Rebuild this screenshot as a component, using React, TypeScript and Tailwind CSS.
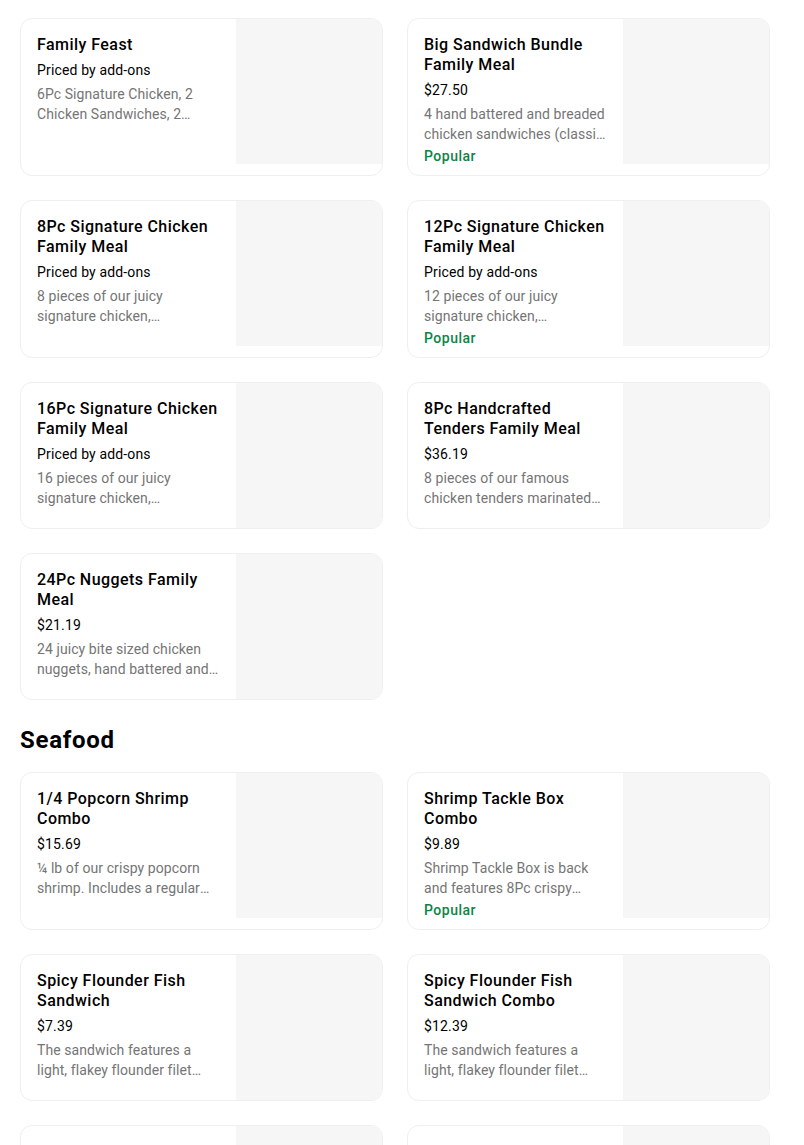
import React from 'react';

interface Item {
  name: string;
  price: string;
  desc: string;
  popular?: boolean;
}

const familyMeals: Item[] = [
  {
    name: 'Family Feast',
    price: 'Priced by add-ons',
    desc: '6Pc Signature Chicken, 2 Chicken Sandwiches, 2 Regular Sides, 4 Biscuits and a 2 Liter drink.',
  },
  {
    name: 'Big Sandwich Bundle Family Meal',
    price: '$27.50',
    desc: '4 hand battered and breaded chicken sandwiches (classic or spicy), 2 large sides and 4 biscuits.',
    popular: true,
  },
  {
    name: '8Pc Signature Chicken Family Meal',
    price: 'Priced by add-ons',
    desc: '8 pieces of our juicy signature chicken, handcrafted fresh daily, 2 large sides and 4 biscuits.',
  },
  {
    name: '12Pc Signature Chicken Family Meal',
    price: 'Priced by add-ons',
    desc: '12 pieces of our juicy signature chicken, handcrafted fresh daily, 3 large sides and 6 biscuits.',
    popular: true,
  },
  {
    name: '16Pc Signature Chicken Family Meal',
    price: 'Priced by add-ons',
    desc: '16 pieces of our juicy signature chicken, handcrafted fresh daily, 4 large sides and 8 biscuits.',
  },
  {
    name: '8Pc Handcrafted Tenders Family Meal',
    price: '$36.19',
    desc: '8 pieces of our famous chicken tenders marinated for 12 hours, 2 large sides and 4 biscuits.',
  },
  {
    name: '24Pc Nuggets Family Meal',
    price: '$21.19',
    desc: '24 juicy bite sized chicken nuggets, hand battered and breaded, 2 large sides and 4 biscuits.',
  },
];

const seafood: Item[] = [
  {
    name: '1/4 Popcorn Shrimp Combo',
    price: '$15.69',
    desc: '¼ lb of our crispy popcorn shrimp. Includes a regular side, a biscuit and a regular drink.',
  },
  {
    name: 'Shrimp Tackle Box Combo',
    price: '$9.89',
    desc: 'Shrimp Tackle Box is back and features 8Pc crispy butterfly shrimp, a regular side and a biscuit.',
    popular: true,
  },
  {
    name: 'Spicy Flounder Fish Sandwich',
    price: '$7.39',
    desc: 'The sandwich features a light, flakey flounder filet topped with spicy sauce and pickles.',
  },
  {
    name: 'Spicy Flounder Fish Sandwich Combo',
    price: '$12.39',
    desc: 'The sandwich features a light, flakey flounder filet topped with spicy sauce and pickles.',
  },
  {
    name: 'Flounder Fish Sandwich',
    price: '$6.99',
    desc: 'The sandwich features a light, flakey flounder filet with tartar sauce.',
  },
  {
    name: 'Flounder Fish Sandwich Combo',
    price: '$11.99',
    desc: 'The sandwich features a light, flakey flounder filet with tartar sauce.',
  },
];

const ItemCard: React.FC<{ item: Item }> = ({ item }) => (
  <div className="flex overflow-hidden rounded-xl border border-[#efefef] bg-white">
    <div className="min-w-0 flex-1 px-4 pt-4 pb-[9px]">
      <h3 className="text-base leading-5 font-medium tracking-[0.45px] text-black">{item.name}</h3>
      <p className="mt-[5px] text-sm leading-5 tracking-[0.15px] text-black">{item.price}</p>
      <p className="mt-1 line-clamp-2 text-sm leading-5 tracking-[0.08px] text-[#757575]">{item.desc}</p>
      {item.popular && (
        <p className="mt-[2px] text-sm leading-5 font-medium tracking-[0.5px] text-[#0e8345]">Popular</p>
      )}
    </div>
    <div className="h-[145px] w-[146px] shrink-0 self-start bg-[#f6f6f6]" />
  </div>
);

export default function App() {
  return (
    <div
      className="h-[1145px] overflow-hidden bg-white pt-[18px] pl-5"
      style={{ fontFamily: 'Roboto, "Noto Sans", sans-serif' }}
    >
      <div className="w-[750px]">
        <div className="grid grid-cols-2 gap-6">
          {familyMeals.map((item) => (
            <ItemCard key={item.name} item={item} />
          ))}
        </div>
        <h2 className="mt-6 mb-4 text-2xl leading-8 font-bold tracking-[0.7px] text-black">Seafood</h2>
        <div className="grid grid-cols-2 gap-6">
          {seafood.map((item) => (
            <ItemCard key={item.name} item={item} />
          ))}
        </div>
      </div>
    </div>
  );
}
